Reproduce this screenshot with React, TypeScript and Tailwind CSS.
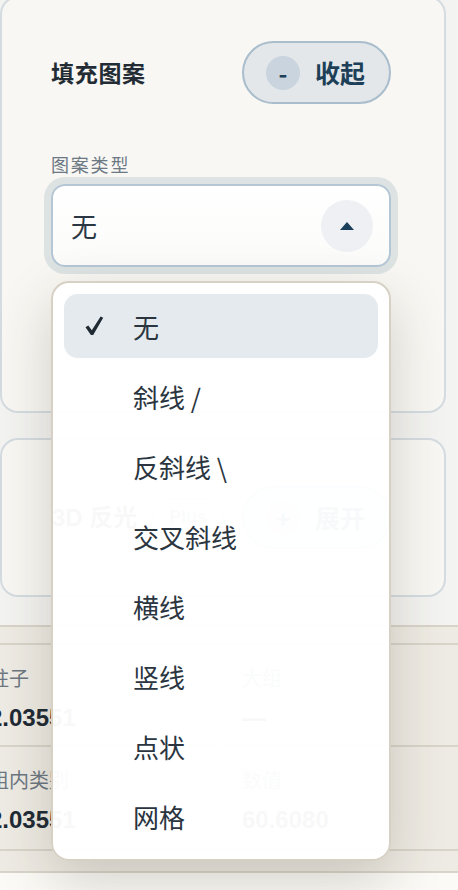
import { ReactElement } from "react"

const CJK = '"Noto Sans CJK SC", "Noto Sans", sans-serif'
const NUM = '"Liberation Sans", "Noto Sans CJK SC", sans-serif'

const PATTERNS = ['无', '斜线 /', '反斜线 \\', '交叉斜线', '横线', '竖线', '点状', '网格']

const PILL_CLASSNAME = 'flex items-center h-[63px] w-[149px] rounded-full border-2 border-[#a9bdcc] bg-[#e3e7ea] pl-[22px]'
const LABEL_CLASSNAME = 'text-[20px] leading-[28px] text-[#6c7782]'
const VALUE_CLASSNAME = 'mt-[10px] text-[24px] leading-[30px] font-bold text-[#1e2a35]'

const CheckIcon = (): ReactElement => (
    <svg width="19" height="20" viewBox="0 0 19 20">
        <path d="M0.5 11.2 L3.3 9.4 L6.8 14.2 L15.6 0.6 L18.2 1.8 L8.2 19 L5.9 19 Z" fill="#1f2a33" />
    </svg>
)

const App = (): ReactElement => {
    return (
        <div className="relative w-[458px] h-[890px] overflow-hidden bg-[#f3f3f1]" style={{ fontFamily: CJK }}>
            {/* fill pattern card */}
            <div className="mt-[-4px] w-[446px] h-[417px] rounded-[18px] border-2 border-[#d4dce1] bg-[#f8f7f3] pt-[43px] pl-[49px] pr-[53px]">
                <div className="flex items-center justify-between">
                    <span className="text-[23px] font-bold tracking-[0.03em] text-[#232c34]">填充图案</span>
                    <button className={PILL_CLASSNAME}>
                        <span className="flex items-center justify-center w-[34px] h-[34px] rounded-full bg-[#c9d4de] text-[24px] font-bold leading-none text-[#1d3f57]">-</span>
                        <span className="ml-[15px] text-[25px] font-bold text-[#1d3f57]">收起</span>
                    </button>
                </div>

                <div className="mt-[48px] text-[18px] leading-[24px] tracking-[0.1em] text-[#6c7884]">图案类型</div>

                <div className="relative mt-[8px]">
                    <div className="flex items-center justify-between h-[83px] rounded-[14px] border-2 border-[#b5c7d5] bg-gradient-to-b from-white to-[#fbfbfa] pl-[18px] pr-[16px] ring-[7px] ring-[#dde3e3]">
                        <span className="text-[26px] text-[#2b3844]">无</span>
                        <span className="flex items-center justify-center w-[52px] h-[52px] rounded-full bg-[#eef0f3]">
                            <svg width="14" height="8" viewBox="0 0 14 8">
                                <path d="M7 0 L14 8 L0 8 Z" fill="#1b3f5a" />
                            </svg>
                        </span>
                    </div>

                    {/* dropdown menu */}
                    <div className="absolute left-0 right-0 top-full mt-[14px] z-10 flex flex-col gap-[6px] rounded-[18px] border-2 border-[#d6d1c4] bg-white/[0.97] p-[11px] shadow-[0_20px_56px_rgba(60,50,30,0.2)]">
                        {PATTERNS.map((name, i) => (
                            <div key={name} className={`flex items-center h-[64px] rounded-[14px] pl-[21px] ${i === 0 ? 'bg-[#dfe5ea]/[0.8]' : ''}`}>
                                <span className="w-[48px]">{i === 0 ? <CheckIcon /> : null}</span>
                                <span className="text-[26px] text-[#2a3540]">{name}</span>
                            </div>
                        ))}
                    </div>
                </div>

                <button className="mt-[27px] flex items-center w-full h-[66px] rounded-[14px] border-2 border-[#dfe3e6] pl-[19px] text-[26px] text-[#8c96a0]">应用到此组</button>
            </div>

            {/* 3D card */}
            <div className="mt-[25px] flex items-center justify-between w-[446px] h-[159px] rounded-[18px] border-2 border-[#d4dce1] bg-[#f8f7f3] pl-[50px] pr-[53px]">
                <div className="flex items-center gap-[16px]">
                    <span className="text-[24px] font-bold text-[#232c34]" style={{ fontFamily: NUM }}>3D 反光</span>
                    <span className="flex items-center h-[40px] rounded-full border-2 border-[#d4dce1] px-[14px] text-[18px] font-bold text-[#7d8b97]" style={{ fontFamily: NUM }}>Plus</span>
                </div>
                <button className={PILL_CLASSNAME}>
                    <span className="flex items-center justify-center w-[34px] h-[34px] rounded-full bg-[#c9d4de] text-[24px] font-bold leading-none text-[#1d3f57]">+</span>
                    <span className="ml-[15px] text-[25px] font-bold text-[#1d3f57]">展开</span>
                </button>
            </div>

            {/* data table */}
            <div className="mt-[28px] border-y-2 border-[#d8d4ca] bg-[#eeebe4] pt-[16px] pb-[20px]" style={{ fontFamily: NUM }}>
                <div className="border-y-2 border-[#d8d4ca]">
                    <div className="flex h-[102px] border-b-2 border-[#d8d4ca]">
                        <div className="ml-[-22px] w-[242px] pl-[11px] pt-[20px] border-r border-[#dad6cd]">
                            <div className={LABEL_CLASSNAME}>柱子</div>
                            <div className={VALUE_CLASSNAME}>2.03551</div>
                        </div>
                        <div className="pl-[22px] pt-[20px]">
                            <div className={LABEL_CLASSNAME}>大组</div>
                            <div className={VALUE_CLASSNAME}>—</div>
                        </div>
                    </div>
                    <div className="flex h-[102px]">
                        <div className="ml-[-22px] w-[242px] pl-[11px] pt-[20px] border-r border-[#dad6cd]">
                            <div className={LABEL_CLASSNAME}>组内类别</div>
                            <div className={VALUE_CLASSNAME}>2.03551</div>
                        </div>
                        <div className="pl-[22px] pt-[20px]">
                            <div className={LABEL_CLASSNAME}>数值</div>
                            <div className={VALUE_CLASSNAME}>60.6080</div>
                        </div>
                    </div>
                </div>
            </div>
            <div className="h-[40px] bg-[#fbfaf6]" />
        </div>
    )
}

export default App
